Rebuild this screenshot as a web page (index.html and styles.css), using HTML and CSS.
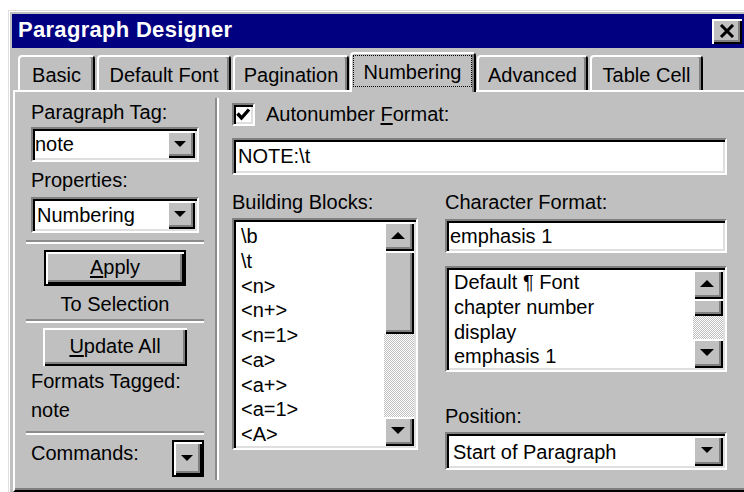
FILE: index.html
```html
<!DOCTYPE html>
<html lang="en">
<head>
<meta charset="utf-8">
<title>Paragraph Designer</title>
<link rel="stylesheet" href="styles.css">
</head>
<body>
<div class="window">
  <div class="titlebar">
    <span class="title">Paragraph Designer</span>
    <div class="close raised">
      <svg width="16" height="14" viewBox="0 0 16 14" aria-hidden="true"><path d="M2 1 L14 13 M14 1 L2 13" stroke="#000" stroke-width="3" fill="none"/></svg>
    </div>
  </div>

  <div class="tabs">
    <div class="tab">Basic</div>
    <div class="tab">Default Font</div>
    <div class="tab">Pagination</div>
    <div class="tab tab-active"><span class="focus">Numbering</span></div>
    <div class="tab">Advanced</div>
    <div class="tab">Table Cell</div>
  </div>

  <div class="panel">
    <div class="side">
      <div class="label lbl-tag">Paragraph Tag:</div>
      <div class="combo sunken combo-tag">
        <span class="combo-value">note</span>
        <span class="drop raised"><i class="arrow-down"></i></span>
      </div>
      <div class="label lbl-props">Properties:</div>
      <div class="combo sunken combo-props">
        <span class="combo-value">Numbering</span>
        <span class="drop raised"><i class="arrow-down"></i></span>
      </div>
      <div class="hsep sep-1"></div>
      <div class="btn raised btn-default btn-apply"><span><u>A</u>pply</span></div>
      <div class="label centered lbl-selection">To Selection</div>
      <div class="hsep sep-2"></div>
      <div class="btn raised btn-update"><span><u>U</u>pdate All</span></div>
      <div class="label lbl-tagged">Formats Tagged:</div>
      <div class="label lbl-note">note</div>
      <div class="hsep sep-3"></div>
      <div class="commands">
        <span class="label lbl-commands">Commands:</span>
        <span class="cmd-btn raised btn-default"><i class="arrow-down"></i></span>
      </div>
    </div>

    <div class="vsep"></div>

    <div class="main">
      <div class="check-row">
        <span class="checkbox sunken">
          <svg width="15" height="15" viewBox="0 0 15 15" aria-hidden="true"><path d="M1.5 6.5 L5.5 11 L13 2.5" stroke="#000" stroke-width="3.4" fill="none"/></svg>
        </span>
        <span class="check-label">Autonumber <u>F</u>ormat:</span>
      </div>
      <div class="field sunken field-format">NOTE:\t</div>

      <div class="columns">
        <div class="col-blocks">
          <div class="label lbl-col">Building Blocks:</div>
          <div class="list sunken list-blocks">
            <div class="items items-blocks">
              <div>\b</div>
              <div>\t</div>
              <div>&lt;n&gt;</div>
              <div>&lt;n+&gt;</div>
              <div>&lt;n=1&gt;</div>
              <div>&lt;a&gt;</div>
              <div>&lt;a+&gt;</div>
              <div>&lt;a=1&gt;</div>
              <div>&lt;A&gt;</div>
            </div>
            <div class="scroll">
              <span class="sb-btn raised"><i class="arrow-up"></i></span>
              <span class="thumb raised thumb-blocks"></span>
              <span class="track"></span>
              <span class="sb-btn raised"><i class="arrow-down big"></i></span>
            </div>
          </div>
        </div>

        <div class="col-char">
          <div class="label lbl-col">Character Format:</div>
          <div class="field sunken field-char">emphasis 1</div>
          <div class="list sunken list-char">
            <div class="items items-char">
              <div>Default ¶ Font</div>
              <div>chapter number</div>
              <div>display</div>
              <div>emphasis 1</div>
            </div>
            <div class="scroll">
              <span class="sb-btn raised"><i class="arrow-up"></i></span>
              <span class="thumb raised thumb-char"></span>
              <span class="track"></span>
              <span class="sb-btn raised"><i class="arrow-down big"></i></span>
            </div>
          </div>
          <div class="label lbl-position">Position:</div>
          <div class="combo sunken combo-position">
            <span class="combo-value">Start of Paragraph</span>
            <span class="drop raised drop-wide"><i class="arrow-down"></i></span>
          </div>
        </div>
      </div>
    </div>
  </div>
</div>
</body>
</html>
```

FILE: styles.css
```css
* {
  box-sizing: border-box;
}

html,
body {
  margin: 0;
  padding: 0;
  overflow: hidden;
  background: #fff;
}

body {
  width: 744px;
  height: 492px;
  font-family: "Liberation Sans", Arial, sans-serif;
  font-size: 20px;
  line-height: 23px;
  color: #000;
}

u {
  text-decoration-thickness: 2px;
  text-underline-offset: 2px;
}

/* ---- 3D frames ---- */
.raised {
  background: #c0c0c0;
  box-shadow: inset 2px 2px #fff, inset -2px -2px #000, inset -4px -4px #808080;
}

.sunken {
  background: #fff;
  border: 2px solid;
  border-color: #808080 #fff #fff #808080;
  box-shadow: inset 2px 2px #000, inset -2px -2px #dfdfdf;
  padding: 2px;
}

.btn-default {
  border: 2px solid #000;
}

/* ---- window frame ---- */
.window {
  margin: 10px 0 0 8px;
  width: 738px;
  height: 482px;
  background: #c0c0c0;
  border-top: 1px solid #dfdfdf;
  border-left: 1px solid #dfdfdf;
  box-shadow: inset 1px 1px #fff;
  padding: 3px 0 0 3px;
}

.titlebar {
  height: 34px;
  background: #000080;
  display: flex;
  align-items: center;
  justify-content: space-between;
  padding: 0 4px 0 6px;
}

.title {
  color: #fff;
  font-weight: bold;
  font-size: 22px;
  letter-spacing: 0.3px;
  line-height: 26px;
  margin-top: -2px;
}

.close {
  width: 30px;
  height: 25px;
  display: flex;
  align-items: center;
  justify-content: center;
  padding: 0 1px 1px 0;
}

/* ---- tab strip ---- */
.tabs {
  height: 42px;
  display: flex;
  align-items: flex-end;
  padding-left: 6px;
}

.tab {
  height: 35px;
  margin-right: 2px;
  padding-top: 7px;
  text-align: center;
  white-space: nowrap;
  background: #c0c0c0;
  border-top: 2px solid #fff;
  border-left: 2px solid #fff;
  border-right: 2px solid #000;
  border-radius: 4px 4px 0 0;
  box-shadow: inset -2px 0 #808080;
}

.tab:nth-child(1) { width: 77px; }
.tab:nth-child(2) { width: 134px; }
.tab:nth-child(3) { width: 116px; }
.tab:nth-child(4) { width: 126px; }
.tab:nth-child(5) { width: 111px; }
.tab:nth-child(6) { width: 113px; }

.tab-active {
  height: 40px;
  margin: 0 1px -2px -1px;
  padding: 1px 2px 0 1px;
  position: relative;
  z-index: 1;
}

.focus {
  display: block;
  height: 32px;
  border: 1px dotted #000;
  padding-top: 5px;
}

/* ---- property page ---- */
.panel {
  margin-left: 1px;
  height: 402px;
  border-top: 2px solid #fff;
  border-left: 2px solid #fff;
  border-bottom: 2px solid #000;
  box-shadow: inset 0 -2px #808080;
  display: flex;
  align-items: flex-start;
}

.label {
  white-space: nowrap;
}

.centered {
  text-align: center;
}

/* left column */
.side {
  width: 178px;
  margin-left: 11px;
  display: flex;
  flex-direction: column;
}

.side > .label {
  margin-left: 5px;
}

.lbl-tag { margin-top: 9px; }
.lbl-props { margin-top: 7px; }
.lbl-selection { margin-top: 7px; margin-left: 0 !important; }
.lbl-tagged { margin-top: 4px; }
.lbl-note { margin-top: 6px; }

.combo {
  display: flex;
  align-items: stretch;
}

.combo-value {
  flex: 1;
  display: flex;
  align-items: center;
  padding-left: 2px;
  white-space: nowrap;
}

.side .combo {
  margin: 0 5px;
}

.combo-tag {
  height: 35px;
  margin-top: 3px !important;
}

.combo-tag .combo-value {
  padding-left: 0;
}

.combo-props {
  height: 36px;
  margin-top: 5px !important;
}

.drop {
  width: 28px;
  display: flex;
  align-items: center;
  justify-content: center;
  padding: 0 2px 2px 0;
}

.drop-wide {
  width: 30px;
}

.arrow-down {
  width: 0;
  height: 0;
  border-left: 6px solid transparent;
  border-right: 6px solid transparent;
  border-top: 6px solid #000;
}

.arrow-down.big {
  border-left-width: 7px;
  border-right-width: 7px;
  border-top-width: 7px;
}

.arrow-up {
  width: 0;
  height: 0;
  border-left: 7px solid transparent;
  border-right: 7px solid transparent;
  border-bottom: 7px solid #000;
}

.hsep {
  height: 4px;
  border-top: 2px solid #8c8c8c;
  border-bottom: 2px solid #fff;
}

.sep-1 { margin-top: 7px; }
.sep-2 { margin-top: 3px; }
.sep-3 { margin-top: 9px; }

.btn {
  display: flex;
  align-items: center;
  justify-content: center;
  align-self: center;
  white-space: nowrap;
}

.btn span {
  margin-top: -1px;
}

.btn-apply {
  width: 142px;
  height: 36px;
  margin-top: 6px;
}

.btn-update {
  width: 144px;
  height: 38px;
  margin-top: 5px;
}

.commands {
  margin-top: 5px;
  display: flex;
  justify-content: space-between;
  align-items: flex-start;
}

.lbl-commands {
  margin: 2px 0 0 5px;
}

.cmd-btn {
  width: 32px;
  height: 37px;
  display: flex;
  align-items: center;
  justify-content: center;
  padding: 0 2px 2px 0;
}

/* divider between columns */
.vsep {
  width: 4px;
  height: 382px;
  margin: 6px 0 0 11px;
  border-left: 2px solid #8c8c8c;
  border-right: 2px solid #fff;
}

/* right area */
.main {
  width: 495px;
  margin-left: 13px;
  display: flex;
  flex-direction: column;
}

.check-row {
  margin-top: 10px;
  height: 24px;
  display: flex;
  align-items: center;
}

.checkbox {
  width: 23px;
  height: 23px;
  display: flex;
  align-items: center;
  justify-content: center;
  padding: 0;
}

.check-label {
  margin-left: 11px;
  white-space: nowrap;
}

.field {
  display: flex;
  align-items: center;
  white-space: nowrap;
}

.field-format {
  margin-top: 12px;
  height: 37px;
  padding-left: 4px;
}

.columns {
  display: flex;
  gap: 27px;
}

.col-blocks {
  width: 186px;
  display: flex;
  flex-direction: column;
}

.col-char {
  width: 282px;
  display: flex;
  flex-direction: column;
}

.lbl-col {
  margin-top: 16px;
}

.list {
  display: flex;
}

.list-blocks {
  margin-top: 4px;
  height: 232px;
}

.field-char {
  margin-top: 5px;
  height: 34px;
  padding-left: 3px;
}

.list-char {
  margin-top: 13px;
  height: 106px;
}

.items {
  flex: 1;
  overflow: hidden;
  line-height: 24.75px;
  padding-left: 5px;
  white-space: nowrap;
}

.items-blocks {
  padding-top: 2px;
}

.items-char {
  padding-top: 0;
}

.scroll {
  width: 30px;
  display: flex;
  flex-direction: column;
}

.sb-btn {
  height: 29px;
  flex: none;
  display: flex;
  align-items: center;
  justify-content: center;
  padding: 0 2px 2px 0;
}

.thumb {
  flex: none;
}

.thumb-blocks {
  height: 83px;
}

.thumb-char {
  height: 17px;
}

.track {
  flex: 1;
  background-color: #c0c0c0;
  background-image: repeating-conic-gradient(#fff 0 25%, #c0c0c0 0 50%);
  background-size: 2px 2px;
}

.lbl-position {
  margin-top: 33px;
}

.combo-position {
  margin-top: 4px;
  height: 38px;
}

.combo-position .combo-value {
  padding: 2px 0 0 4px;
}
```
